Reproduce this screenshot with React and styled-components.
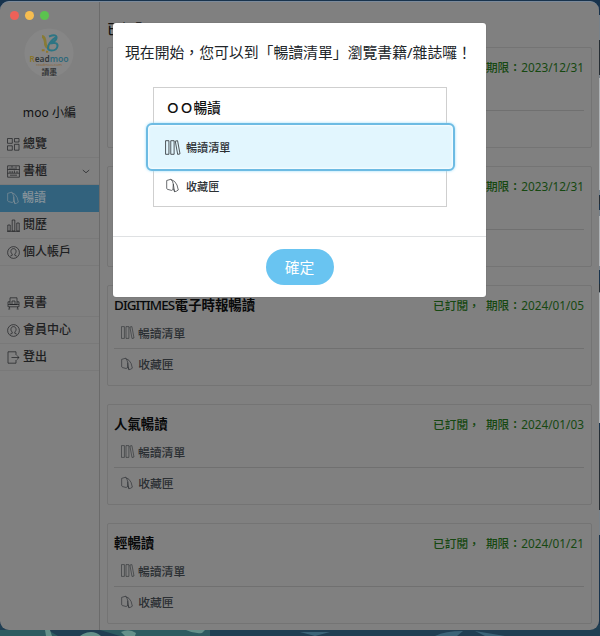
import React from "react";
import styled, { createGlobalStyle } from "styled-components";

const Global = createGlobalStyle`
  * { box-sizing: border-box; }
  body {
    margin: 0;
    background: #18334d;
    font-family: "Noto Sans", "Noto Sans CJK TC", sans-serif;
  }
  h2, h3, p { margin: 0; }
`;

const Desktop = styled.div`
  position: relative;
  width: 600px;
  height: 636px;
  padding-top: 1px;
  overflow: hidden;
`;

const Wallpaper = styled.svg`
  position: absolute;
  inset: 0;
`;

const Window = styled.div`
  position: relative;
  display: flex;
  width: 599px;
  height: 629px;
  background: #808080;
  border-top: 1px solid #7b8a9b;
  border-radius: 9px;
  overflow: hidden;
`;

const Lights = styled.div`
  position: absolute;
  left: 10px;
  top: 9px;
  display: flex;
  gap: 6px;
`;

const Light = styled.i`
  width: 9px;
  height: 9px;
  border-radius: 50%;
  background: ${(p) => p.$color};
`;

const Sidebar = styled.aside`
  flex: none;
  width: 100px;
  border-right: 1px solid #6b6b6b;
  color: #1c1e20;
`;

const Avatar = styled.div`
  width: 50px;
  height: 50px;
  margin: 26px 0 0 24px;
  svg { display: block; }
`;

const UserName = styled.p`
  height: 20px;
  margin: 25px 0 8px;
  font-size: 12.1px;
  line-height: 20px;
  text-align: center;
  color: #101112;
`;

const Nav = styled.nav`
  margin-bottom: 24px;
`;

const NavItem = styled.a`
  display: flex;
  align-items: center;
  height: 27px;
  padding: 0 9px 0 7px;
  gap: 3px;
  border-bottom: 1px solid ${(p) => (p.$active ? "#32627d" : "#797979")};
  background: ${(p) => (p.$active ? "#32627d" : "transparent")};
  color: ${(p) => (p.$active ? "#85929a" : "#1e2022")};
  font-size: 12px;
  line-height: 26px;
  font-weight: 500;
  svg { flex: none; }
  span { flex: 1; white-space: nowrap; }
`;

const Main = styled.main`
  flex: 1;
  padding: 17px 7px 0;
`;

const PageTitle = styled.h2`
  height: 28px;
  font-size: 14px;
  line-height: 20px;
  font-weight: 500;
  color: #111;
`;

const Cards = styled.div`
  display: grid;
  gap: 18px;
`;

const Card = styled.section`
  height: 101px;
  padding: 9px 7px 0 6px;
  border: 1px solid #747474;
  border-radius: 2px;
`;

const CardHead = styled.header`
  display: flex;
  justify-content: space-between;
  height: 20px;
  line-height: 20px;
`;

const CardTitle = styled.h3`
  font-size: 13.4px;
  font-weight: 700;
  color: #08090a;
  white-space: nowrap;
`;

const Latin = styled.span`
  font-weight: 500;
  letter-spacing: -0.9px;
  margin-right: 0.5px;
`;

const Status = styled.p`
  display: flex;
  font-size: 11.7px;
  font-weight: 500;
  color: #164811;
  white-space: nowrap;
`;

const DateText = styled.span`
  width: 63px;
  font-size: 11.8px;
  font-weight: 400;
  text-align: right;
`;

const CardRow = styled.div`
  display: flex;
  align-items: center;
  gap: 4px;
  height: ${(p) => (p.$first ? "34px" : "29px")};
  padding: ${(p) => (p.$first ? "2px 0 0 7px" : "0 0 0 7px")};
  border-bottom: ${(p) => (p.$first ? "1px solid #707070" : "0")};
  color: #2b2f33;
  font-size: 11.8px;
  font-weight: 500;
`;

const Dialog = styled.div`
  position: absolute;
  left: 113px;
  top: 23px;
  width: 373px;
  height: 274px;
  background: #fff;
  border-radius: 3px;
  box-shadow: 0 0 1px #555;
`;

const DialogBody = styled.div`
  height: 214px;
  padding: 17px 12px 0;
  border-bottom: 1px solid #dfe1e3;
`;

const DialogTitle = styled.h2`
  height: 24px;
  font-size: 14.85px;
  line-height: 24px;
  font-weight: 400;
  color: #212529;
  white-space: nowrap;
`;

const Sample = styled.div`
  width: 294px;
  height: 120px;
  margin: 23px 0 0 28px;
  padding-top: 8px;
  border: 1px solid #cfcfcf;
`;

const SampleTitle = styled.h3`
  height: 24px;
  padding-left: 12px;
  font-size: 13.7px;
  line-height: 24px;
  font-weight: 500;
  color: #111;
`;

const SampleRow = styled.div`
  display: flex;
  align-items: center;
  gap: 7px;
  height: 29px;
  padding-left: 12px;
  font-size: 11.1px;
  font-weight: 500;
  color: #2b2f33;
`;

const HighlightRow = styled(SampleRow)`
  width: 309px;
  height: 48px;
  margin: 3px 0 0 -8px;
  padding-left: 17px;
  gap: 6px;
  background: #e2f6fe;
  border: 2px solid #6dbbe3;
  border-radius: 6px;
  box-shadow: inset 0 0 2px 1px #f7fdff, 0 0 3px #9adcf9;
`;

const DialogFoot = styled.footer`
  display: flex;
  justify-content: center;
  padding-top: 12px;
`;

const Confirm = styled.button`
  width: 68px;
  height: 36px;
  padding: 0;
  border: 0;
  border-radius: 18px;
  background: #69c4f1;
  color: #fff;
  font: 400 14.8px/34px "Noto Sans CJK TC", sans-serif;
`;

const shapes = {
  overview: <path d="M.5.5h4.8v4.8H.5zM7.5.5h4.5v3.5H7.5zM.5 7.8h4.8v4.4H.5zM7.5 6.3h4.5v5.9H7.5z" />,
  shelf: <path d="M.6.8h11.8v11.4H.6zM.6 4.5h11.8M.6 8.2h11.8M3 2.5v2M5 1v3.5M7 2.5v2M9 1.5v3M3 6v2M5.2 6v2M7.4 5.5V8M10 6v2M3 10.2h7" />,
  file: <path d="M.7 1.5 4.8.3Q9.5 2 11 6l1.3 5q-1.8 1.5-3.8 1.7L7.6 10l-2 1.4-4.2-1.1q-.7-.3-.7-1.3zM4.8.3Q6.8 2 7.3 5l1.2 7.7M7.3 5l-.3 5" />,
  stats: <path d="M.8 6h2.4v6H.8zM5.2 1h2.6v11H5.2zM9.8 4h2.4v8H9.8zM0 12.4h13" />,
  person: (
    <>
      <circle cx="6.5" cy="6.5" r="5.9" />
      <path d="M5.2 8C3 6.3 3.8 2.6 6.5 2.6S10 6.3 7.8 8v1.3l2 .9M5.2 8v1.3l-2 .9" />
    </>
  ),
  cart: <path d="M3 .8h7v6.7H3zM5 7.5V4h3v3.5M1 4.8v5h11v-5M1 4.8h2M12 4.8h-2M1 7.5h11M2.5 9.8v1.7M10.5 9.8v1.7M1.2 12h2M9.7 12h2" />,
  exit: <path d="M9 4V.8H1v11.4h8V9M4.5 6.5H12M9.8 4.3 12 6.5 9.8 8.7" />,
  books: <path d="M.5.6h2.9v11.8H.5zM5 .6h2.9v11.8H5zM8.9 1l2-.4 2.1 11.4-2 .5z" />,
};

function Icon({ name, size = 13, width = 0.7 }) {
  return (
    <svg width={size} height={size} viewBox="0 0 13 13" overflow="visible" fill="none" stroke="currentColor" strokeWidth={width} strokeLinejoin="round">
      {shapes[name]}
    </svg>
  );
}

function Logo() {
  return (
    <svg width="50" height="50" viewBox="0 0 50 50" fill="none">
      <circle cx="25" cy="25" r="24.5" fill="#868686" />
      <path d="M18 8.5q3 0 3.5 8 1 3.5 4 3" stroke="#887b35" strokeWidth="2.8" />
      <path d="M25 8.5q8-3 7.5 1.5-.5 3.5-7.5 5.5 9-2 8.5 2.5-.5 4.5-6 4.5-5 0-3-5 2-5 7-8" stroke="#2d7584" strokeWidth="2" />
      <path d="M17.8 22.2h2.8M22 23.8h2.2" stroke="#92772d" strokeWidth="2" />
      <g fontFamily="Noto Sans" fontSize="8.2" fontWeight="600">
        <text x="5.5" y="33.5" fill="#89752b">R</text>
        <text x="10.7" y="33.5" fill="#303638" textLength="15" lengthAdjust="spacingAndGlyphs">ead</text>
        <text x="25.7" y="33.5" fill="#30697b" textLength="19" lengthAdjust="spacingAndGlyphs">moo</text>
      </g>
      <text x="12" y="38" fontFamily="Noto Sans" fontSize="4.2" fill="#8a663c" textLength="26">readmoo.com</text>
      <text x="17.5" y="46.8" fontFamily="Noto Sans CJK TC" fontSize="7.8" fontWeight="500" fill="#292b2c">讀墨</text>
    </svg>
  );
}

const primary = [
  ["overview", "總覽"],
  ["shelf", "書櫃"],
  ["file", "暢讀"],
  ["stats", "閱歷"],
  ["person", "個人帳戶"],
];
const secondary = [
  ["cart", "買書"],
  ["person", "會員中心"],
  ["exit", "登出"],
];
const plans = [
  ["", "", "2023/12/31"],
  ["", "", "2023/12/31"],
  ["DIGITIMES", "電子時報暢讀", "2024/01/05"],
  ["", "人氣暢讀", "2024/01/03"],
  ["", "輕暢讀", "2024/01/21"],
];

function Menu({ items }) {
  return (
    <Nav>
      {items.map(([icon, label]) => (
        <NavItem key={label} $active={label === "暢讀"}>
          <Icon name={icon} size={icon === "file" ? 12 : 13} />
          <span>{label}</span>
          {label === "書櫃" && (
            <svg width="8" height="5" viewBox="0 0 8 5" fill="none" stroke="#292b2d" strokeWidth=".8">
              <path d="m.8 1 3.2 2.8L7.2 1" />
            </svg>
          )}
        </NavItem>
      ))}
    </Nav>
  );
}

function Plan({ latin, name, date }) {
  return (
    <Card>
      <CardHead>
        <CardTitle>{latin && <Latin>{latin}</Latin>}{name}</CardTitle>
        <Status>已訂閱，&nbsp; 期限：<DateText>{date}</DateText></Status>
      </CardHead>
      <CardRow $first><Icon name="books" width={0.6} />暢讀清單</CardRow>
      <CardRow><Icon name="file" size={12} />&#8202;收藏匣</CardRow>
    </Card>
  );
}

export default function App() {
  return (
    <Desktop lang="zh-Hant">
      <Global />
      <Wallpaper width="600" height="636">
        <path d="M0 625h600v11H0z" fill="#203f53" />
        <path d="M0 630h48l10 6H0zM100 630h110v6h-90z" fill="#2d5c61" />
        <path d="M45 630h5l2 6h-6zM83 634q10-5 18 2H80zM121 632q8-4 15 1l-1 3h-10zM186 630h19l-3 3q-8 1-16-3z" fill="#64918a" />
        <path d="M435 636q10-5 28-5l-6 5zM475 631l30 5h-20zM300 632h30l-15 4z" fill="#3b6478" />
        <path d="M597 15h3v180h-3zM597 210h3v60h-3zM597 285h3v135h-3zM597 510h3v25h-3z" fill="#77818a" />
        <path d="M598 78h2v112h-2zM598 216h2v50h-2zM598 293h2v130h-2z" fill="#b0b4b7" />
        <path d="M597 40h3v35h-3zM598 196h2v8h-2zM598 284h2v8h-2zM597 430h3v80h-3z" fill="#252d34" />
      </Wallpaper>
      <Window>
        <Sidebar>
          <Avatar><Logo /></Avatar>
          <UserName>moo 小編</UserName>
          <Menu items={primary} />
          <Menu items={secondary} />
        </Sidebar>
        <Main>
          <PageTitle>已訂閱</PageTitle>
          <Cards>
            {plans.map(([latin, name, date], i) => (
              <Plan key={i} latin={latin} name={name} date={date} />
            ))}
          </Cards>
        </Main>
        <Lights>
          <Light $color="#ed6158" />
          <Light $color="#f6bd50" />
          <Light $color="#5bc34f" />
        </Lights>
      </Window>
      <Dialog>
        <DialogBody>
          <DialogTitle>現在開始，您可以到「暢讀清單」瀏覽書籍/雜誌囉！</DialogTitle>
          <Sample>
            <SampleTitle>ＯＯ暢讀</SampleTitle>
            <HighlightRow><Icon name="books" size={15} />暢讀清單</HighlightRow>
            <SampleRow><Icon name="file" size={13} />收藏匣</SampleRow>
          </Sample>
        </DialogBody>
        <DialogFoot><Confirm>確定</Confirm></DialogFoot>
      </Dialog>
    </Desktop>
  );
}
